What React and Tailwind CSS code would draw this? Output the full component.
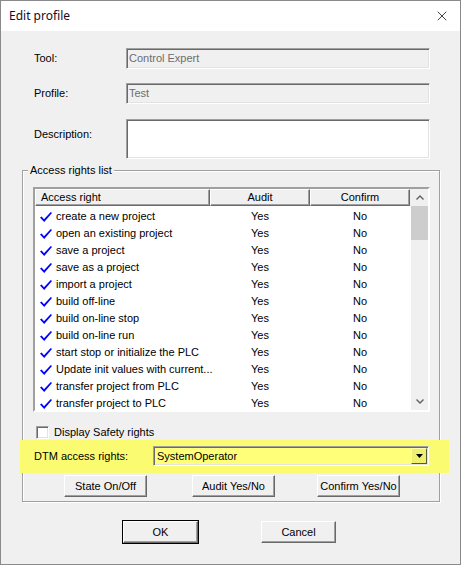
import { X } from "lucide-react"

const rights = [
  "create a new project",
  "open an existing project",
  "save a project",
  "save as a project",
  "import a project",
  "build off-line",
  "build on-line stop",
  "build on-line run",
  "start stop or initialize the PLC",
  "Update init values with current...",
  "transfer project from PLC",
  "transfer project to PLC",
]

const sunken = "border border-t-[#a0a0a0] border-l-[#a0a0a0] border-b-white border-r-white shadow-[inset_1px_1px_0_#696969,inset_-1px_-1px_0_#e3e3e3]"
const raised = "border border-t-white border-l-white border-r-[#696969] border-b-[#696969] shadow-[inset_-1px_-1px_0_#a0a0a0]"

function Check() {
  return (
    <svg width="12" height="10" viewBox="0 0 12 10" className="shrink-0">
      <polygon points="0,5.5 1.6,4.5 4,7.2 10.8,0 12,1 4.2,10" fill="#0000ff" />
    </svg>
  )
}

function Button({ children, className = "", isDefault }) {
  return (
    <div className={`h-[22px] flex items-center justify-center bg-[#f0f0f0] ${isDefault ? "outline outline-1 outline-black" : ""} ${raised} ${className}`}>
      {children}
    </div>
  )
}

function Field({ label, value }) {
  return (
    <div className="flex items-center h-[21px]">
      <span className="w-[92px]">{label}</span>
      <div className={`w-[304px] h-[21px] flex items-center pl-[2px] text-[#6d6d6d] bg-[#f0f0f0] ${sunken}`}>{value}</div>
    </div>
  )
}

export default function App() {
  return (
    <div className="w-[461px] h-[565px] bg-[#f0f0f0] border border-[#8a8a8a] flex flex-col text-[11px] text-black" style={{ fontFamily: '"Liberation Sans", Arial, sans-serif' }}>
      {/* title bar */}
      <div className="h-[30px] bg-white flex items-center justify-between pl-[8px] pr-[10px] shrink-0">
        <span className="text-[12px] text-[#1b0a1f]" style={{ fontFamily: '"Noto Sans", sans-serif' }}>Edit profile</span>
        <X size={16} strokeWidth={1.2} color="#111" />
      </div>

      <div className="pl-[33px] pt-[17px] flex flex-col">
        <Field label="Tool:" value="Control Expert" />
        <div className="mt-[14px]">
          <Field label="Profile:" value="Test" />
        </div>
        <div className="mt-[15px] flex items-start">
          <span className="w-[92px] pt-[7px]">Description:</span>
          <div className={`w-[304px] h-[40px] bg-white ${sunken}`} />
        </div>
      </div>

      {/* access rights group */}
      <fieldset className="mt-[5px] ml-[21px] w-[418px] border border-[#a0a0a0] shadow-[inset_1px_1px_0_#fff,1px_1px_0_#fff] pl-[10px] pr-[9px] pt-[10px] pb-[4px]">
        <legend className="-ml-[5px] px-[2px] leading-[13px] bg-[#f0f0f0]">Access rights list</legend>

        <div className="h-[225px] border-2 border-t-[#a0a0a0] border-l-[#a0a0a0] border-b-white border-r-white bg-white flex">
          <div className="w-[376px] flex flex-col overflow-hidden">
            <div className="h-[17px] shrink-0 flex bg-[#f0f0f0]">
              <div className={`w-[175px] pl-[5px] flex items-center ${raised}`}>Access right</div>
              <div className={`w-[100px] flex items-center justify-center ${raised}`}>Audit</div>
              <div className={`w-[100px] flex items-center justify-center ${raised}`}>Confirm</div>
            </div>
            <div className="pt-[2px]">
              {rights.map((r) => (
                <div key={r} className="h-[17px] flex items-center">
                  <div className="w-[175px] flex items-center pl-[5px] gap-[4px]">
                    <Check />
                    <span className="whitespace-nowrap">{r}</span>
                  </div>
                  <div className="w-[100px] text-center">Yes</div>
                  <div className="w-[100px] text-center">No</div>
                </div>
              ))}
            </div>
          </div>
          <div className="w-[17px] bg-[#f0f0f0] flex flex-col">
            <div className="h-[17px] flex items-center justify-center">
              <svg width="8" height="5" viewBox="0 0 8 5"><path d="M0.5 4.5 L4 1 L7.5 4.5" stroke="#606060" strokeWidth="1.4" fill="none" /></svg>
            </div>
            <div className="h-[34px] bg-[#cdcdcd]" />
            <div className="flex-1" />
            <div className="h-[17px] flex items-center justify-center">
              <svg width="8" height="5" viewBox="0 0 8 5"><path d="M0.5 0.5 L4 4 L7.5 0.5" stroke="#606060" strokeWidth="1.4" fill="none" /></svg>
            </div>
          </div>
        </div>

        <div className="mt-[14px] ml-[3px] flex items-center gap-[5px] h-[13px]">
          <div className={`w-[13px] h-[13px] bg-white ${sunken}`} />
          <span>Display Safety rights</span>
        </div>

        {/* DTM row, marked with a highlighter */}
        <div className="mt-[1px] -ml-[13px] -mr-[19px] bg-[#fbfb72] pl-[14px] pr-[20px] pt-[6px] pb-[7px] flex items-center">
          <span className="w-[119px]">DTM access rights:</span>
          <div className={`flex-1 h-[20px] flex items-center bg-[#ffff7a] ${sunken}`}>
            <span className="flex-1 pl-[3px]">SystemOperator</span>
            <div className="w-[16px] h-[16px] mr-[1px] bg-[#f0f070] border border-t-[#fdfdb0] border-l-[#fdfdb0] border-r-[#5a5a30] border-b-[#5a5a30] flex items-center justify-center">
              <svg width="7" height="4" viewBox="0 0 7 4"><polygon points="0,0 7,0 3.5,4" fill="#000" /></svg>
            </div>
          </div>
        </div>

        <div className="mt-[2px] flex">
          <Button className="w-[83px] ml-[31px]">State On/Off</Button>
          <Button className="w-[83px] ml-[45px]">Audit Yes/No</Button>
          <Button className="w-[83px] ml-[42px]">Confirm Yes/No</Button>
        </div>
      </fieldset>

      <div className="mt-[19px] flex">
        <Button isDefault className="w-[75px] ml-[122px]">OK</Button>
        <Button className="w-[75px] ml-[63px]">Cancel</Button>
      </div>
    </div>
  )
}
